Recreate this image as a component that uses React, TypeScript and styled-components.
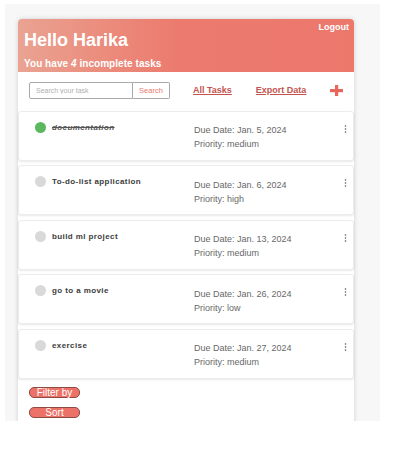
import React from "react";
import styled, { createGlobalStyle } from "styled-components";

const GlobalStyle = createGlobalStyle`
  html, body { margin: 0; padding: 0; background: #ffffff; }
  body { font-family: "Liberation Sans", Arial, sans-serif; }
  * { box-sizing: border-box; }
`;

const Page = styled.div`
  margin: 4px 0 0 5px;
  width: 375px;
  height: 417px;
  background: #f7f7f7;
  padding: 15px 26px 0 13px;
  overflow: hidden;
`;

const Card = styled.div`
  background: #ffffff;
  border-radius: 4px 4px 0 0;
  box-shadow: 0 0 5px rgba(0, 0, 0, 0.16);
  display: flex;
  flex-direction: column;
  min-height: 410px;
`;

const Header = styled.header`
  height: 53px;
  border-radius: 4px 4px 0 0;
  background: linear-gradient(90deg, #eaa392 0%, #eb8a7b 28%, #ec7a6e 48%, #ec786c 100%);
  display: grid;
  grid-template-columns: 1fr auto;
  grid-template-rows: auto auto;
  padding: 3px 5px 0 6px;
  color: #ffffff;
`;

const Title = styled.h1`
  grid-column: 1;
  grid-row: 1;
  margin: 8.7px 0 0;
  font-size: 18px;
  line-height: 18px;
  font-weight: 700;
`;

const Logout = styled.span`
  grid-column: 2;
  grid-row: 1;
  align-self: start;
  font-size: 9px;
  line-height: 11px;
  font-weight: 700;
`;

const Subtitle = styled.p`
  grid-column: 1 / span 2;
  grid-row: 2;
  margin: 7px 0 0;
  font-size: 10px;
  line-height: 12px;
  font-weight: 700;
  letter-spacing: 0.05px;
  em { font-style: italic; }
`;

const Toolbar = styled.div`
  height: 36px;
  display: flex;
  align-items: center;
  padding: 0 11px;
`;

const SearchGroup = styled.div`
  display: flex;
  align-items: stretch;
  height: 17px;
  margin-right: 23px;
  flex: none;
`;

const SearchInput = styled.input`
  width: 104px;
  height: 17px;
  border: 1px solid #a9a9a9;
  border-radius: 2px 0 0 2px;
  padding: 0 6px;
  font-family: "Liberation Sans", Arial, sans-serif;
  font-size: 7px;
  color: #555;
  outline: none;
  &::placeholder { color: #b0b0b0; }
`;

const SearchButton = styled.button`
  width: 37px;
  height: 17px;
  border: 1px solid #a9a9a9;
  border-left: none;
  border-radius: 0 2px 2px 0;
  background: #ffffff;
  color: #ec7a6e;
  font-family: "Liberation Sans", Arial, sans-serif;
  font-size: 7.5px;
  padding: 0;
`;

const NavLink = styled.a`
  color: #c4534f;
  font-size: 9px;
  font-weight: 700;
  text-decoration: underline;
  margin-right: 24px;
  white-space: nowrap;
  flex: none;
  cursor: pointer;
`;

const AddButton = styled.span`
  display: inline-flex;
  flex: none;
`;

const TaskList = styled.div`
  display: flex;
  flex-direction: column;
  gap: 4.5px;
  padding-top: 2.5px;
`;

const TaskCard = styled.div`
  height: 50px;
  background: #ffffff;
  border: 1px solid #ececec;
  border-radius: 3px;
  box-shadow: 0 1px 2px rgba(0, 0, 0, 0.09);
  display: grid;
  grid-template-columns: 175px 1fr 9px;
  align-items: start;
`;

const TaskMain = styled.div`
  display: flex;
  align-items: center;
  gap: 6px;
  padding: 10px 0 0 16px;
  height: 21px;
`;

const Dot = styled.span<{ $done: boolean }>`
  width: 11px;
  height: 11px;
  border-radius: 50%;
  background: ${(p) => (p.$done ? "#5cb85c" : "#d9d9d9")};
  flex: none;
`;

const TaskName = styled.span<{ $done: boolean }>`
  font-size: 8px;
  font-weight: 700;
  letter-spacing: 0.4px;
  color: ${(p) => (p.$done ? "#555" : "#3c3c3c")};
  font-style: ${(p) => (p.$done ? "italic" : "normal")};
  text-decoration: ${(p) => (p.$done ? "line-through" : "none")};
`;

const TaskMeta = styled.div`
  padding-top: 11.5px;
  display: flex;
  flex-direction: column;
  font-size: 9px;
  line-height: 14px;
  color: #686868;
`;

const Kebab = styled.span`
  padding-top: 13px;
  display: flex;
  justify-content: flex-start;
`;

const Footer = styled.div`
  display: flex;
  flex-direction: column;
  align-items: flex-start;
  gap: 9px;
  padding: 8px 11px 0;
`;

const PillButton = styled.button`
  width: 51px;
  height: 11px;
  padding: 0;
  border: 1px solid #8e4a45;
  border-radius: 5px;
  background: #ec7268;
  color: #ffffff;
  font-family: "Liberation Sans", Arial, sans-serif;
  font-size: 10px;
  line-height: 9px;
`;

const tasks = [
  { name: "documentation", due: "Jan. 5, 2024", priority: "medium", done: true },
  { name: "To-do-list application", due: "Jan. 6, 2024", priority: "high", done: false },
  { name: "build ml project", due: "Jan. 13, 2024", priority: "medium", done: false },
  { name: "go to a movie", due: "Jan. 26, 2024", priority: "low", done: false },
  { name: "exercise", due: "Jan. 27, 2024", priority: "medium", done: false },
];

const DotsIcon = () => (
  <svg width="3" height="8" viewBox="0 0 3 8">
    <circle cx="1.5" cy="1" r="0.8" fill="#555" />
    <circle cx="1.5" cy="4" r="0.8" fill="#555" />
    <circle cx="1.5" cy="7" r="0.8" fill="#555" />
  </svg>
);

const PlusIcon = () => (
  <svg width="13" height="11" viewBox="0 0 13 11">
    <rect x="0" y="4" width="13" height="3.2" fill="#e8675c" />
    <rect x="5" y="0" width="3.2" height="11" fill="#e8675c" />
  </svg>
);

export default function App() {
  return (
    <>
      <GlobalStyle />
      <Page>
        <Card>
          <Header>
            <Title>Hello Harika</Title>
            <Logout>Logout</Logout>
            <Subtitle>
              You have <em>4</em> incomplete tasks
            </Subtitle>
          </Header>
          <Toolbar>
            <SearchGroup>
              <SearchInput placeholder="Search your task" />
              <SearchButton>Search</SearchButton>
            </SearchGroup>
            <NavLink>All Tasks</NavLink>
            <NavLink>Export Data</NavLink>
            <AddButton>
              <PlusIcon />
            </AddButton>
          </Toolbar>
          <TaskList>
            {tasks.map((t) => (
              <TaskCard key={t.name}>
                <TaskMain>
                  <Dot $done={t.done} />
                  <TaskName $done={t.done}>{t.name}</TaskName>
                </TaskMain>
                <TaskMeta>
                  <span>Due Date: {t.due}</span>
                  <span>Priority: {t.priority}</span>
                </TaskMeta>
                <Kebab>
                  <DotsIcon />
                </Kebab>
              </TaskCard>
            ))}
          </TaskList>
          <Footer>
            <PillButton>Filter by</PillButton>
            <PillButton>Sort</PillButton>
          </Footer>
        </Card>
      </Page>
    </>
  );
}
